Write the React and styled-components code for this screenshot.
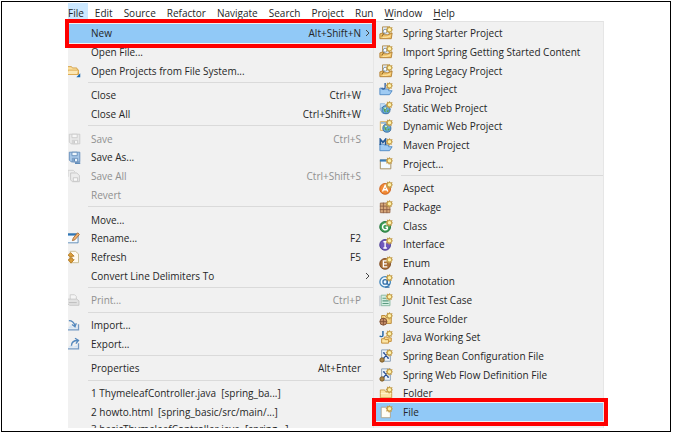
import React from "react";
import styled, { createGlobalStyle, css } from "styled-components";

const GlobalStyle = createGlobalStyle`
  * { box-sizing: border-box; }
  body {
    margin: 0;
    background: #fff;
    color: #262626;
    font-family: "Open Sans", "Noto Sans", sans-serif;
    font-size: 10px;
  }
  button { font: inherit; color: inherit; border: 0; background: none; padding: 0; margin: 0; }
`;

const Frame = styled.main`
  display: flex;
  flex-direction: column;
  min-height: calc(100vh - 2px);
  margin: 1px 2px 1px 1px;
  padding: 1px 66px 3px;
  border: 1px solid #000;
`;

const MenuBar = styled.nav`
  display: flex;
  gap: 11px;
  height: 18px;
`;

const MenuBarItem = styled.button`
  line-height: 20px;
  white-space: nowrap;
  ${(p) => p.$open && css`
    background: #cce8ff;
    box-shadow: 4px 0 0 #cce8ff;
  `}
`;

const Mnemonic = styled.span`
  text-decoration: underline;
  text-underline-offset: 2px;
`;

const Menus = styled.div`
  flex: 1;
  display: grid;
  grid-template-columns: 306fr 230fr;
`;

const Menu = styled.div`
  display: flex;
  flex-direction: column;
  min-width: 0;
  padding-top: 2px;
  background: #f1f1f1;
  border-top: 1px solid #e2e2e2;
  border-right: 1px solid #e6e6e6;
`;

const MenuRow = styled.button`
  position: relative;
  flex: 1 1 18px;
  display: grid;
  grid-template-columns: ${(p) => (p.$sub ? "29px 1fr" : "23px 1fr auto 12px")};
  align-items: center;
  text-align: left;
  white-space: nowrap;
  line-height: 16px;
  color: ${(p) => (p.disabled ? "#909090" : "#262626")};
  ${(p) => p.$marked && css`
    background: #91c9f7;
    &::after {
      content: "";
      position: absolute;
      inset: ${(p) => (p.$sub ? "-5px -5px -5px -2px" : "-5px -3px")};
      border: 4px solid #fe0000;
      z-index: 1;
      pointer-events: none;
    }
  `}
`;

const IconCell = styled.span`
  display: flex;
  height: 16px;
  align-items: center;
  overflow: hidden;
  padding-left: ${(p) => (p.$sub ? "5px" : "0")};
  svg { display: block; flex: none; }
`;

const Arrow = styled.span`
  display: flex;
  justify-content: center;
`;

const Separator = styled.hr`
  flex: 0 0 6px;
  width: auto;
  margin: 0 0 0 ${(p) => (p.$sub ? "27px" : "20px")};
  border: 0;
  background: linear-gradient(#dadada, #dadada) 0 2px / 100% 1px no-repeat;
`;

const MenuFoot = styled.div`
  display: flex;
  flex: 0 0 7px;
  height: 7px;
  overflow: hidden;
`;

const Star = () => (
  <g>
    <path d="M12 0l1.300 1.700 2.200-.7-.7 2.200L16 4.500l-1.600 1.200.4 2.100-2.200-.5L11.500 9l-1.200-2-2.200.3.7-2.100L7.500 3.800l1.700-1.200L9 .6l2 .7z" fill="#c49d4b" />
    <circle cx="12" cy="4.300" r="2" fill="#fff2a6" />
  </g>
);

const Ball = ({ fill, edge, children }) => (
  <>
    <circle cx="7" cy="9" r="6.200" fill={fill} stroke={edge} />
    {children}
    <Star />
  </>
);

const SpringArt = () => (
  <>
    <path d="M4 1h8v10H4z" fill="#dfe9f5" stroke="#b18a45" />
    <path d="M1 14.500V9l3-1 2 2h4l5-2-1 6.500z" fill="#f3c469" stroke="#ae7c2e" />
    <circle cx="7" cy="6" r="2.200" fill="#fff" stroke="#7690a8" />
    <path d="M6 8l-3 4" stroke="#8f6828" strokeWidth="1.300" />
    <path d="M4 13c3 0 7 0 9-2" stroke="#fff0b8" fill="none" />
    <Star />
  </>
);

const Globe = ({ x, y }) => (
  <>
    <circle cx={x} cy={y} r="4.600" fill="#63a7dc" stroke="#36699c" />
    <path d={`M${x - 3} ${y - 2}l3-1 1 2-2 1 1 3-2-1zM${x + 1} ${y + 1}l2-1v2l-2 1z`} fill="#5da646" />
    <circle cx={x - 1} cy={y - 2} r="1" fill="#e7f7ff" />
  </>
);

const BlueFolder = () => (
  <path d="M1 14.500V7h4l1 1h5v2h4l-3 4.500z" fill="#9fcbf3" stroke="#4a86c2" />
);

const XmlArt = () => (
  <>
    <path d="M3 1h10v13H3z" fill="#eef5fc" stroke="#8199b4" />
    <path d="M5.500 4.500l5 6M10.500 4.500l-5 6M4.500 4.500h2M9.500 4.500h2M4.500 10.500h2M9.500 10.500h2" stroke="#254b91" strokeWidth="1.300" />
    <circle cx="3.500" cy="12.500" r="2.500" fill="#ab8548" stroke="#77551f" />
    <Star />
  </>
);

const Floppy = ({ edge, fill, label }) => (
  <>
    <path d="M1.500 2.500h12v11h-10l-2-2z" fill={fill} stroke={edge} />
    <path d="M4.500 2.500h6v4h-6zM5 9.500h6v4H5z" fill={label} stroke={edge} />
    <path d="M6 10h2v3H6z" fill={edge} />
  </>
);

const art = {
  spring: <SpringArt />,
  java: (
    <>
      <BlueFolder />
      <path d="M7 1v5c0 2-3 3-4 1" stroke="#2f5f9f" strokeWidth="1.500" fill="none" />
      <Star />
    </>
  ),
  staticWeb: (
    <>
      <path d="M1.500 9V3h5l2 2" fill="#c3def7" stroke="#9bbedf" />
      <path d="M1 9c3-3 9-3 12 0l-3 5H4z" fill="#c9e1f8" stroke="#78a5d2" />
      <Globe x={8} y={10} />
      <Star />
    </>
  ),
  dynamicWeb: (
    <>
      <path d="M1.500 3h8v10h-8z" fill="#fff6da" stroke="#d6ab59" />
      <path d="M2 4.500h7" stroke="#71a3d5" strokeWidth="1.500" />
      <Globe x={9} y={10.500} />
      <Star />
    </>
  ),
  maven: (
    <>
      <BlueFolder />
      <path d="M1.500 8V1.500L4.500 5l3-3.500V8" stroke="#245a97" strokeWidth="1.900" fill="none" />
      <Star />
    </>
  ),
  project: (
    <>
      <path d="M1.500 3.500h12v10h-12z" fill="#f4faff" stroke="#9d8550" />
      <path d="M1 4h12" stroke="#397dba" strokeWidth="2.500" />
      <Star />
    </>
  ),
  aspect: (
    <Ball fill="#f18a35" edge="#c95c15">
      <path d="M4 12l3-7 3 7M5 10h4" stroke="#fff" strokeWidth="1.500" fill="none" />
    </Ball>
  ),
  package: (
    <>
      <path d="M1.500 3.500h11v11h-11z" fill="#d8a87a" stroke="#98694a" />
      <path d="M5 3v12M9 3v12M1 7h12M1 11h12" stroke="#8b5d42" />
      <Star />
    </>
  ),
  class: (
    <Ball fill="#3e9d55" edge="#207138">
      <path d="M9.500 7C8 4.800 4 5.800 4 9.200s4 4 5.500 2.100V9.500H7.500" stroke="#fff" strokeWidth="1.700" fill="none" />
    </Ball>
  ),
  interface: (
    <Ball fill="#7059bc" edge="#493b91">
      <path d="M5 5.500h4M7 5.500v7M5 12.500h4" stroke="#fff" strokeWidth="1.600" />
    </Ball>
  ),
  enum: (
    <Ball fill="#a96e36" edge="#78451c">
      <path d="M9.500 5.500H5v7h4.500M5 9h4" stroke="#fff" strokeWidth="1.500" fill="none" />
    </Ball>
  ),
  annotation: (
    <>
      <circle cx="7" cy="9" r="6" fill="#eff8ff" stroke="#4387bc" strokeWidth="1.500" />
      <circle cx="7" cy="9" r="2.500" fill="none" stroke="#336fa8" strokeWidth="1.500" />
      <path d="M9.500 6.500v5l3 .5M7 15h5" fill="none" stroke="#336fa8" strokeWidth="1.500" />
      <Star />
    </>
  ),
  junit: (
    <>
      <path d="M2.500 2.500h10v12h-10z" fill="#d3eee1" stroke="#84b49d" />
      <path d="M4 6h4M4 9h7M4 12h7" stroke="#5b9a80" strokeWidth="1.300" />
      <path d="M1 3v12" stroke="#acb7c3" />
      <Star />
    </>
  ),
  source: (
    <>
      <path d="M3 12V4h4l1 2h6v7H6z" fill="#f8d482" stroke="#b3802d" />
      <circle cx="5" cy="11" r="4" fill="#c68f69" stroke="#7e4e32" />
      <path d="M5 7v8M1 11h8" stroke="#7e4e32" />
      <Star />
    </>
  ),
  working: (
    <>
      <path d="M4.500 1v5c0 2-3 2-3.500.5" stroke="#2868a4" strokeWidth="1.700" fill="none" />
      <path d="M6 8h3l1 1h4v4H6z" fill="#ffdc8a" stroke="#bd852d" />
      <path d="M3 10h3l1 1h4v4H3z" fill="#fce5a4" stroke="#bd852d" />
      <Star />
    </>
  ),
  xml: <XmlArt />,
  folder: (
    <>
      <path d="M1.500 13.500v-9h5l1 2h7v7z" fill="#fbe3a4" stroke="#c99840" />
      <path d="M2 8.500h12" stroke="#fff5ce" />
      <Star />
    </>
  ),
  file: (
    <>
      <path d="M2.500 2.500h7l3.500 4v8H2.500z" fill="#fffdf5" stroke="#a9a18a" />
      <Star />
    </>
  ),
  open: (
    <>
      <path d="M-1 12V3h5l1 1.500h5l1 2.500h1v5z" fill="#fbe0a0" stroke="#d19a3b" />
      <path d="M-1 12l1-5h12l-1 5z" fill="#fbe7b6" stroke="#daa84e" />
      <path d="M9.500 15H14v-4.500z" fill="#1467b3" />
    </>
  ),
  save: <Floppy edge="#cacaca" fill="#e9e9e9" label="#f7f7f7" />,
  saveAs: (
    <>
      <Floppy edge="#628cb9" fill="#a8c8e8" label="#eef6fc" />
      <path d="M8 15h6" stroke="#376fa9" strokeWidth="1.500" />
    </>
  ),
  saveAll: (
    <>
      <path d="M0 9V1.500h6l2 2" fill="#eee" stroke="#cdcdcd" />
      <path d="M3 4.500h7l3 3v7H5l-2-2z" fill="#ececec" stroke="#c5c5c5" />
      <path d="M6 10h5v4H6z" fill="#fafafa" stroke="#c5c5c5" />
    </>
  ),
  rename: (
    <>
      <path d="M-1 3.500h12.500v10H-1z" fill="#f5faff" stroke="#5684b1" />
      <path d="M0 4h12" stroke="#2f75b4" strokeWidth="2.500" />
      <path d="M5 11l1-3 5-6 2 2-5 6z" fill="#efb273" stroke="#a86a31" />
    </>
  ),
  refresh: (
    <>
      <path d="M2.500 1.500h6l3.500 3v10H2.500z" fill="#fffaf0" stroke="#c6b98f" />
      <path d="M0 6l3-3 4 4H4.500v1H2V7zM7 11l-3.500 4L0 11h2V9h3v2z" fill="#dc9f3c" stroke="#b57d26" />
    </>
  ),
  print: (
    <>
      <path d="M2.500 7V2h5l2 2v3" fill="#f5f5f5" stroke="#cacaca" />
      <path d="M-1 7h11l2.500 2v5H2l-3-2z" fill="#e2e2e2" stroke="#c5c5c5" />
      <path d="M1 11h9" stroke="#b7b7b7" />
    </>
  ),
  import: (
    <>
      <path d="M-1 4v9.500h13V7" stroke="#7499c3" strokeWidth="1.500" />
      <path d="M0 12l3-4 3 3 3-2 2 3z" fill="#d2e3f4" />
      <path d="M1 3c4 0 6 2 7 6M4.500 7.500L8 10l1.500-4" stroke="#5488bd" strokeWidth="1.500" />
    </>
  ),
  export: (
    <>
      <path d="M-1 7v6.500h13V7" stroke="#7499c3" strokeWidth="1.500" />
      <path d="M0 12l3-3 3 2 5-2v3z" fill="#d2e3f4" />
      <path d="M4 10c0-4 3-6 7-6M8 1.500L12 4 9 7.500" stroke="#5488bd" strokeWidth="1.500" />
    </>
  ),
};

const Icon = ({ name }) => (
  <svg width="14" height="14" viewBox="0 0 16 16" fill="none" aria-hidden="true">
    {art[name]}
  </svg>
);

const bar = [
  ["", "F", "ile"], ["", "E", "dit"], ["", "S", "ource"], ["Refac", "t", "or"],
  ["", "N", "avigate"], ["Se", "a", "rch"], ["", "P", "roject"], ["", "R", "un"],
  ["", "W", "indow"], ["", "H", "elp"],
];

const fileMenu = [
  { label: "New", keys: "Alt+Shift+N", arrow: true, marked: true },
  { label: "Open File..." },
  { label: "Open Projects from File System...", icon: "open" },
  null,
  { label: "Close", keys: "Ctrl+W" },
  { label: "Close All", keys: "Ctrl+Shift+W" },
  null,
  { label: "Save", keys: "Ctrl+S", icon: "save", disabled: true },
  { label: "Save As...", icon: "saveAs" },
  { label: "Save All", keys: "Ctrl+Shift+S", icon: "saveAll", disabled: true },
  { label: "Revert", disabled: true },
  null,
  { label: "Move..." },
  { label: "Rename...", keys: "F2", icon: "rename" },
  { label: "Refresh", keys: "F5", icon: "refresh" },
  { label: "Convert Line Delimiters To", arrow: true },
  null,
  { label: "Print...", keys: "Ctrl+P", icon: "print", disabled: true },
  null,
  { label: "Import...", icon: "import" },
  { label: "Export...", icon: "export" },
  null,
  { label: "Properties", keys: "Alt+Enter" },
  null,
  { label: "1 ThymeleafController.java  [spring_ba...]" },
  { label: "2 howto.html  [spring_basic/src/main/...]" },
];

const newMenu = [
  { label: "Spring Starter Project", icon: "spring" },
  { label: "Import Spring Getting Started Content", icon: "spring" },
  { label: "Spring Legacy Project", icon: "spring" },
  { label: "Java Project", icon: "java" },
  { label: "Static Web Project", icon: "staticWeb" },
  { label: "Dynamic Web Project", icon: "dynamicWeb" },
  { label: "Maven Project", icon: "maven" },
  { label: "Project...", icon: "project" },
  null,
  { label: "Aspect", icon: "aspect" },
  { label: "Package", icon: "package" },
  { label: "Class", icon: "class" },
  { label: "Interface", icon: "interface" },
  { label: "Enum", icon: "enum" },
  { label: "Annotation", icon: "annotation" },
  { label: "JUnit Test Case", icon: "junit" },
  { label: "Source Folder", icon: "source" },
  { label: "Java Working Set", icon: "working" },
  { label: "Spring Bean Configuration File", icon: "xml" },
  { label: "Spring Web Flow Definition File", icon: "xml" },
  { label: "Folder", icon: "folder" },
  { label: "File", icon: "file", marked: true },
];

const Label = styled.span`
  white-space: pre;
`;

const Item = ({ item, sub }) => (
  <MenuRow role="menuitem" $sub={sub} $marked={item.marked} disabled={item.disabled}>
    <IconCell $sub={sub}>{item.icon && <Icon name={item.icon} />}</IconCell>
    <Label>{item.label}</Label>
    {!sub && <span>{item.keys}</span>}
    {item.arrow && (
      <Arrow>
        <svg width="5" height="8" viewBox="0 0 5 8" fill="none" aria-hidden="true">
          <path d="M1 1l3 3-3 3" stroke="#444" />
        </svg>
      </Arrow>
    )}
  </MenuRow>
);

const renderItems = (items, sub) =>
  items.map((item, i) =>
    item ? <Item key={i} item={item} sub={sub} /> : <Separator key={i} $sub={sub} />
  );

export default function App() {
  return (
    <>
      <GlobalStyle />
      <Frame>
        <MenuBar aria-label="Main menu">
          {bar.map(([before, key, after], i) => (
            <MenuBarItem key={i} $open={i === 0}>
              {before}<Mnemonic>{key}</Mnemonic>{after}
            </MenuBarItem>
          ))}
        </MenuBar>
        <Menus>
          <Menu role="menu" aria-label="File">
            {renderItems(fileMenu, false)}
            <MenuFoot>
              <Item item={{ label: "3 basicThymeleafController.java  [spring...]" }} />
            </MenuFoot>
          </Menu>
          <Menu role="menu" aria-label="New">
            {renderItems(newMenu, true)}
            <MenuFoot />
          </Menu>
        </Menus>
      </Frame>
    </>
  );
}
